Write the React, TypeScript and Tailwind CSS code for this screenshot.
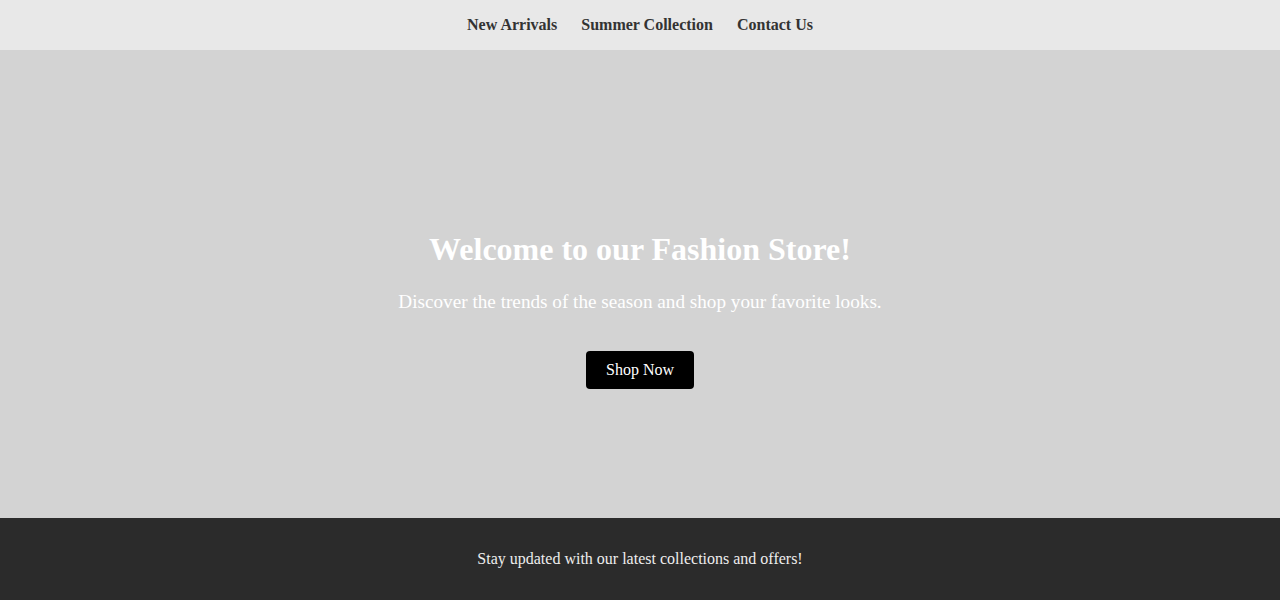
import React from 'react';

const NAV_LINKS = ['New Arrivals', 'Summer Collection', 'Contact Us'];

export default function App() {
  return (
    <div className="min-h-screen font-['Liberation_Serif',serif]">
      <nav className="h-[50px] bg-[#e8e8e8] flex items-center justify-center gap-6">
        {NAV_LINKS.map((link) => (
          <a key={link} href="#" className="text-base font-bold text-[#333333] leading-[18px]">
            {link}
          </a>
        ))}
      </nav>

      <section className="h-[468px] bg-[#d3d3d3] flex flex-col items-center pt-[181px] text-white">
        <h1 className="text-[32px] font-bold leading-[37px]">Welcome to our Fashion Store!</h1>
        <p className="mt-[22px] text-[19.2px] leading-[23px]">
          Discover the trends of the season and shop your favorite looks.
        </p>
        <button className="mt-[38px] h-[38px] px-5 bg-black text-white text-base rounded-[4px]">
          Shop Now
        </button>
      </section>

      <footer className="h-[82px] bg-[#2b2b2b] flex items-center justify-center">
        <p className="text-base text-[#eeeeee] leading-[18px]">
          Stay updated with our latest collections and offers!
        </p>
      </footer>
    </div>
  );
}
